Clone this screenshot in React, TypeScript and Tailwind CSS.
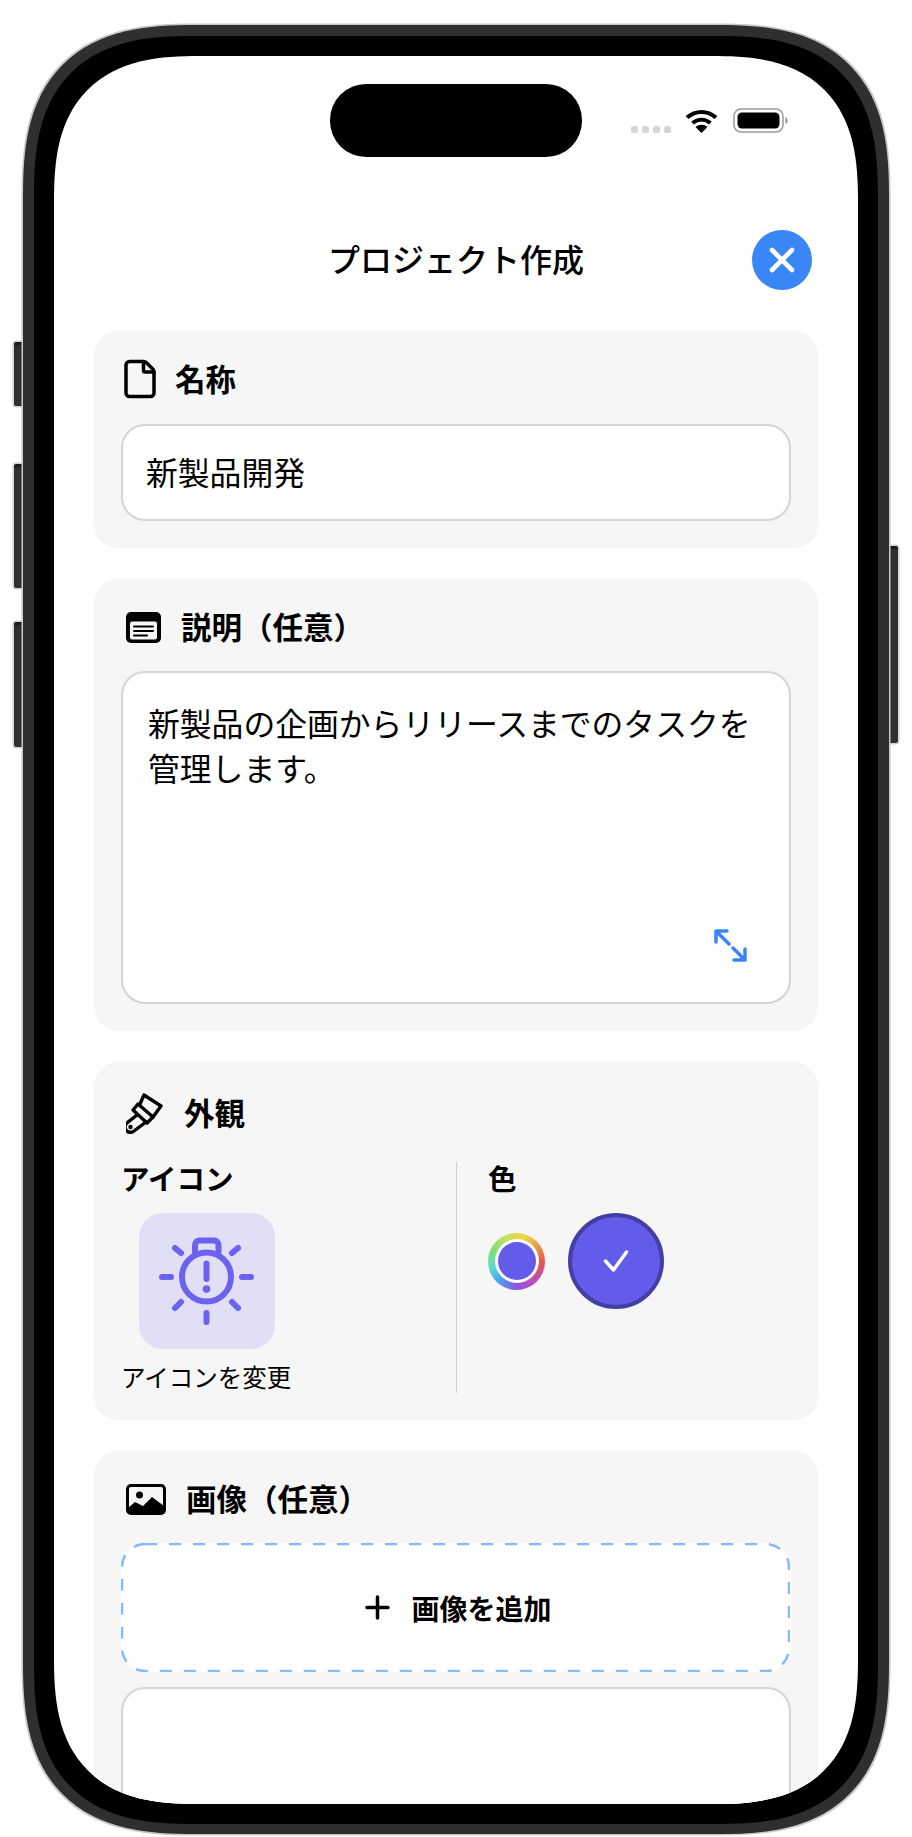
import * as React from 'react';
import { File } from 'lucide-react';

// --------------------------------
// Icons
// --------------------------------
const DescriptionIcon = () => (
  <svg width="35" height="31" viewBox="0 0 35 31">
    <rect width="35" height="31" rx="5" fill="#000" />
    <rect x="4" y="9.5" width="27" height="18" rx="2" fill="#f6f6f6" />
    <path d="M8 14.5H27M8 19H27M8 23.5H21" stroke="#000" strokeWidth="2" strokeLinecap="round" />
  </svg>
);

const BrushIcon = () => (
  <svg width="37" height="41" viewBox="11 8 37 41" fill="none" stroke="#000" strokeWidth="3.4" strokeLinejoin="round" strokeLinecap="round">
    <path d="M25 19L29 10L46 21L38 32" />
    <path d="M23 19L38 32L32 38L18 25Z" />
    <path d="M22 30L12 38A5 5 0 0 0 19 46L31 37" />
    <circle cx="15.5" cy="42" r="1.2" strokeWidth="2" />
  </svg>
);

const ImageIcon = () => (
  <svg width="40" height="31" viewBox="0 0 40 31">
    <rect x="1.5" y="1.5" width="37" height="28" rx="3.5" fill="#f6f6f6" stroke="#000" strokeWidth="3" />
    <circle cx="13.5" cy="11" r="3.5" fill="#000" />
    <path d="M2 24L9 18L17 22L26 13L38 22V29H2Z" fill="#000" />
  </svg>
);

const ExpandIcon = () => (
  <svg width="33" height="33" viewBox="0 0 33 33" fill="none" stroke="#3b86f7" strokeWidth="3.5" strokeLinecap="round" strokeLinejoin="round">
    <path d="M2 13V2H13M2 2L15 15" />
    <path d="M31 20V31H20M31 31L19 19" />
  </svg>
);

const AlertSunIcon = () => (
  <svg width="136" height="136" viewBox="0 0 136 136" fill="none" stroke="#6b63ee" strokeWidth="6" strokeLinecap="round" strokeLinejoin="round">
    <circle cx="67.5" cy="64" r="24.5" />
    <path d="M56 39V32a4.500 4.500 0 0 1 4.500-4.500H75a4.500 4.500 0 0 1 4.500 4.500v7" />
    <path d="M67.500 50.500V66" />
    <circle cx="67.500" cy="76" r="3.800" fill="#6b63ee" stroke="none" />
    <path d="M23 64H32M103 64H112M67.500 100V109M36 35L42 40M99 35L93 40M36 95L42 89M99 95L93 89" />
  </svg>
);

const WifiIcon = () => (
  <svg width="33" height="24" viewBox="0 0 33 24" fill="none" stroke="#000" strokeWidth="4">
    <path d="M2 8.500C10.500 1 22.500 1 31 8.500" />
    <path d="M7.500 14C13 9.500 20 9.500 25.500 14" />
    <path d="M16.500 24L10.500 18C14 15 19 15 22.500 18Z" fill="#000" stroke="none" />
  </svg>
);

const BatteryIcon = () => (
  <svg width="55" height="25" viewBox="0 0 55 25">
    <rect x="1" y="1" width="49" height="23" rx="7" fill="none" stroke="#9a9a9a" strokeWidth="1.500" />
    <rect x="4.500" y="4.500" width="42" height="16" rx="4.500" fill="#000" />
    <path d="M52.500 9C54 10 54.500 11 54.500 12.500S54 15 52.500 16Z" fill="#8a8a8a" />
  </svg>
);

// --------------------------------
// Components
// --------------------------------
const StatusIcons = () => (
  <div className="flex items-end self-start pt-[24px] pl-[49px]">
    <div className="flex gap-[4px]">
      <span className="w-[7px] h-[7px] rounded-[2px] bg-[#d6d6d6]" />
      <span className="w-[7px] h-[7px] rounded-[2px] bg-[#d6d6d6]" />
      <span className="w-[7px] h-[7px] rounded-[2px] bg-[#d6d6d6]" />
      <span className="w-[7px] h-[7px] rounded-[2px] bg-[#d6d6d6]" />
    </div>
    <div className="ml-[14px] h-[24px]">
      <WifiIcon />
    </div>
    <div className="ml-[15px] h-[25px]">
      <BatteryIcon />
    </div>
  </div>
);

const SectionHeading = ({ icon, title, gap }: { icon: React.ReactNode; title: string; gap: string }) => (
  <div className={`flex items-center h-[42px] pl-[5px] ${gap}`}>
    <div className="flex items-center shrink-0">{icon}</div>
    <h2 className="text-[30.5px] leading-[40px] pb-[2px] font-bold">{title}</h2>
  </div>
);

const SideButton = ({ className }: { className: string }) => (
  <div className={`absolute w-[9px] bg-[#2f2f2f] border-t-[3px] border-t-[#1c1c1c] shadow-[0_0_0_1.5px_#d0d0d0] ${className}`} />
);

export default function App() {
  return (
    <div className="relative w-[912px] h-[1837px] bg-white pl-[23px] pt-[25px] overflow-hidden text-black font-['Noto_Sans_CJK_JP','Noto_Sans',sans-serif]">
      <SideButton className="left-[14px] top-[342px] h-[64px] rounded-l-[2px]" />
      <SideButton className="left-[14px] top-[464px] h-[124px] rounded-l-[2px]" />
      <SideButton className="left-[14px] top-[622px] h-[125px] rounded-l-[2px]" />
      <SideButton className="left-[889px] top-[546px] h-[197px] rounded-r-[2px]" />

      {/* Device frame */}
      <div className="relative w-[866px] h-[1809px] rounded-[172px] [corner-shape:superellipse(1.4)] bg-[#2f2f2f] p-[11px] pb-[10px] shadow-[0_0_0_1.5px_#c8c8c8]">
        <div className="w-full h-full rounded-[160px] [corner-shape:superellipse(1.4)] bg-black p-[20px]">
          <div className="w-[804px] h-[1748px] rounded-[146px] [corner-shape:superellipse(1.4)] bg-white overflow-hidden">
            {/* Status bar */}
            <div className="grid grid-cols-[276px_252px_276px] h-[101px] pt-[28px]">
              <div />
              <div className="w-[252px] h-[73px] rounded-[36px] bg-black" />
              <StatusIcons />
            </div>

            {/* Header */}
            <div className="grid grid-cols-[60px_1fr_60px] items-center px-[46px] mt-[73px]">
              <div />
              <h1 className="text-center text-[32px] leading-[56px] pb-[4px] font-medium">プロジェクト作成</h1>
              <button className="flex items-center justify-center w-[60px] h-[60px] rounded-full bg-[#3b86f7]">
                <svg width="26" height="26" viewBox="0 0 26 26" stroke="#fff" strokeWidth="4.600" strokeLinecap="round">
                  <path d="M3 3L23 23M23 3L3 23" />
                </svg>
              </button>
            </div>

            <div className="flex flex-col gap-[31px] px-[40px] mt-[41px]">
              {/* Name */}
              <section className="bg-[#f6f6f6] rounded-[24px] px-[27px] pt-[27px] pb-[27px]">
                <SectionHeading
                  gap="gap-[21px]"
                  icon={<File className="w-[42px] h-[42px] -mx-[7px]" strokeWidth={2} />}
                  title="名称"
                />
                <div className="mt-[24px] h-[97px] flex items-center rounded-[24px] border-2 border-[#d4d4d4] bg-white pl-[23px] pb-[2px] text-[31.8px]">
                  新製品開発
                </div>
              </section>

              {/* Description */}
              <section className="bg-[#f6f6f6] rounded-[24px] px-[27px] pt-[27px] pb-[27px]">
                <SectionHeading gap="gap-[20px]" icon={<DescriptionIcon />} title="説明（任意）" />
                <div className="relative mt-[23px] h-[333px] rounded-[24px] border-2 border-[#d4d4d4] bg-white px-[25px] pt-[27px] text-[31.8px] leading-[44.5px]">
                  新製品の企画からリリースまでのタスクを管理します。
                  <div className="absolute right-[42px] bottom-[40px]">
                    <ExpandIcon />
                  </div>
                </div>
              </section>

              {/* Appearance */}
              <section className="bg-[#f6f6f6] rounded-[24px] px-[27px] pt-[30px] pb-[27px]">
                <SectionHeading gap="gap-[21px]" icon={<BrushIcon />} title="外観" />
                <div className="flex mt-[28px]">
                  <div className="w-[335px] shrink-0">
                    <div className="text-[28.5px] leading-[32px] pb-[2px] font-bold">アイコン</div>
                    <div className="ml-[18px] mt-[17px] w-[136px] h-[136px] rounded-[24px] bg-[#e1dff5]">
                      <AlertSunIcon />
                    </div>
                    <div className="mt-[12px] text-[24.5px] leading-[32px]">アイコンを変更</div>
                  </div>
                  <div className="border-l border-[#d0d0d0] pl-[31px]">
                    <div className="text-[28.5px] leading-[32px] pb-[2px] font-bold">色</div>
                    <div className="flex items-center gap-[23px] mt-[17px]">
                      <div className="flex items-center justify-center w-[57px] h-[57px] rounded-full bg-[conic-gradient(#e8d84a_20deg,#e05a4e_90deg,#c04ac0_140deg,#8a55e0_180deg,#45a8f0_225deg,#60d8d0_255deg,#7de07a_295deg,#c8e060_340deg,#e8d84a_380deg)]">
                        <div className="flex items-center justify-center w-[44px] h-[44px] rounded-full bg-white">
                          <div className="w-[38px] h-[38px] rounded-full bg-[#635bea]" />
                        </div>
                      </div>
                      <div className="flex items-center justify-center w-[96px] h-[96px] rounded-full bg-[#635bea] border-[4px] border-[#453fa3]">
                        <svg width="26" height="24" viewBox="0 0 26 24" fill="none" stroke="#fff" strokeWidth="3.500" strokeLinecap="round" strokeLinejoin="round">
                          <path d="M2.500 12L10.500 21L23.500 3" />
                        </svg>
                      </div>
                    </div>
                  </div>
                </div>
              </section>

              {/* Image */}
              <section className="bg-[#f6f6f6] rounded-[24px] px-[27px] pt-[27px] pb-[27px]">
                <SectionHeading gap="gap-[20px]" icon={<ImageIcon />} title="画像（任意）" />
                <div className="relative mt-[23px] h-[129px] flex items-center justify-center gap-[21px] pl-[5px] rounded-[24px] bg-white">
                  <svg className="absolute inset-0" width="669" height="129" fill="none">
                    <rect x="1" y="1" width="667" height="127" rx="23" stroke="#86bbfb" strokeWidth="2.500" strokeDasharray="12 12" />
                  </svg>
                  <svg width="25" height="25" viewBox="0 0 25 25" stroke="#000" strokeWidth="3.500" strokeLinecap="round">
                    <path d="M12.500 2V23M2 12.500H23" />
                  </svg>
                  <span className="text-[28px] font-bold">画像を追加</span>
                </div>
                <div className="mt-[15px] h-[300px] rounded-[24px] border-2 border-[#d4d4d4] bg-white" />
              </section>
            </div>
          </div>
        </div>
      </div>
    </div>
  );
}
